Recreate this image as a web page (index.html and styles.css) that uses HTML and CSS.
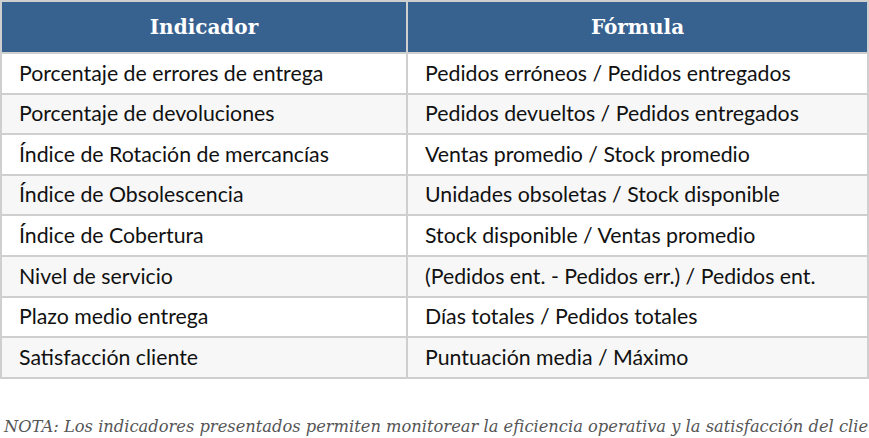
FILE: index.html
```html
<!DOCTYPE html>
<html lang="es">
<head>
<meta charset="utf-8">
<link rel="stylesheet" href="styles.css">
</head>
<body>
<table class="kpi">
  <thead>
    <tr><th class="col-a">Indicador</th><th>Fórmula</th></tr>
  </thead>
  <tbody>
    <tr><td>Porcentaje de errores de entrega</td><td>Pedidos erróneos / Pedidos entregados</td></tr>
    <tr><td>Porcentaje de devoluciones</td><td>Pedidos devueltos / Pedidos entregados</td></tr>
    <tr><td>Índice de Rotación de mercancías</td><td>Ventas promedio / Stock promedio</td></tr>
    <tr><td>Índice de Obsolescencia</td><td>Unidades obsoletas / Stock disponible</td></tr>
    <tr><td>Índice de Cobertura</td><td>Stock disponible / Ventas promedio</td></tr>
    <tr><td>Nivel de servicio</td><td>(Pedidos ent. - Pedidos err.) / Pedidos ent.</td></tr>
    <tr><td>Plazo medio entrega</td><td>Días totales / Pedidos totales</td></tr>
    <tr><td>Satisfacción cliente</td><td>Puntuación media / Máximo</td></tr>
  </tbody>
</table>
<p class="note">NOTA: Los indicadores presentados permiten monitorear la eficiencia operativa y la satisfacción del cliente.</p>
</body>
</html>
```
FILE: styles.css
```css
html, body {
  margin: 0;
  padding: 0;
  background: #fff;
  overflow: hidden;
}
body {
  width: 869px;
  height: 438px;
}
.kpi {
  border-collapse: collapse;
  width: 869px;
  table-layout: fixed;
  font-family: Lato, "Liberation Sans", sans-serif;
}
.kpi th, .kpi td {
  border: 2px solid #cfcfcf;
  text-align: left;
}
.kpi .col-a {
  width: 404px;
}
.kpi th {
  background: #37618f;
  color: #fff;
  font-family: "DejaVu Serif", serif;
  font-weight: bold;
  font-size: 20px;
  text-align: center;
  height: 50px;
  padding: 0;
}
.kpi td {
  font-size: 21.3px;
  color: #111;
  height: 38.6px;
  padding: 0 0 0 17px;
  white-space: nowrap;
  line-height: 1.1;
}
.kpi tbody tr:nth-child(even) td {
  background: #f7f7f7;
}
.note {
  margin: 38px 0 0 4px;
  font-family: "DejaVu Serif", serif;
  font-style: italic;
  font-size: 16.3px;
  color: #555;
  white-space: nowrap;
}
```
